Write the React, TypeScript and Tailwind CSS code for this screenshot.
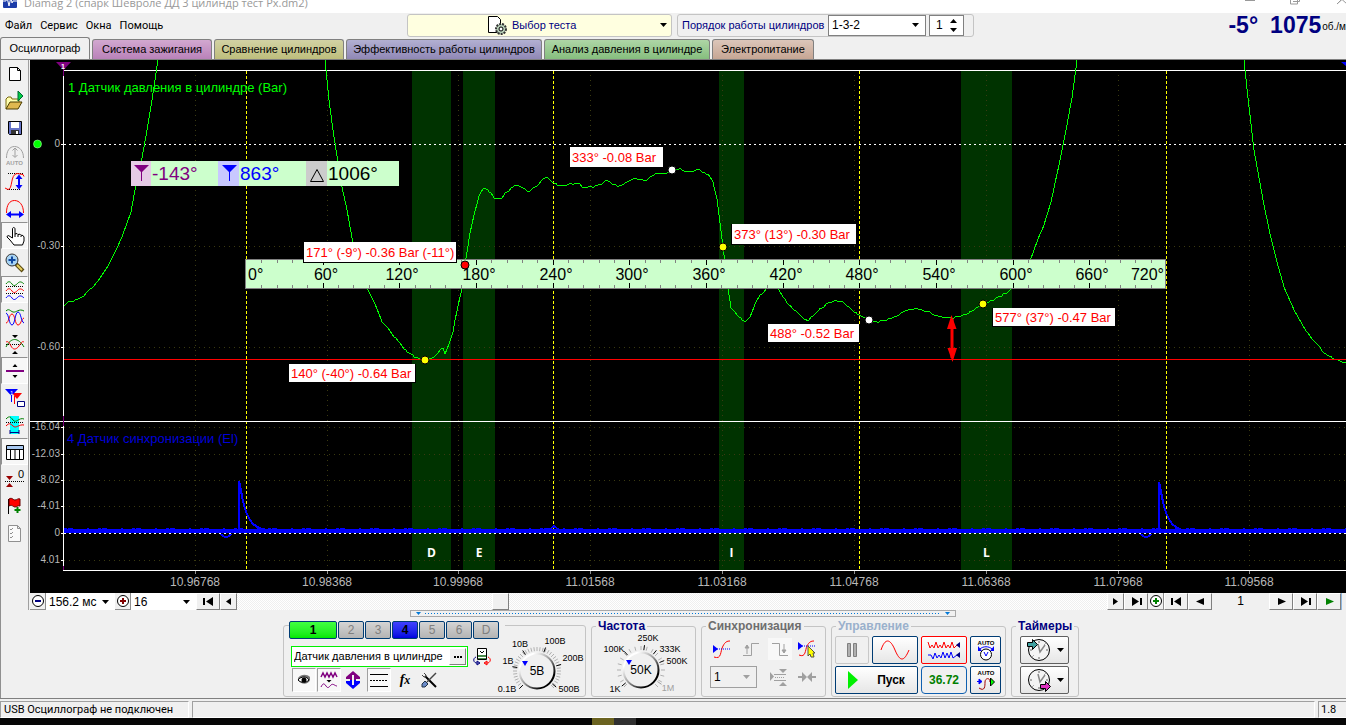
import type { ReactNode } from "react";

type Point = [number, number];

const tabs = [
  { label: "Система зажигания", style: "w-[120px] from-[#d2a8d0] to-[#b982b9]" },
  { label: "Сравнение цилиндров", style: "w-[130px] from-[#d2d2a4] to-[#bebe7c]" },
  { label: "Эффективность работы цилиндров", style: "w-[196px] from-[#b2b0d2] to-[#9088b6]" },
  { label: "Анализ давления в цилиндре", style: "w-[166px] from-[#aed6a6] to-[#86be7e]" },
  { label: "Электропитание", style: "w-[102px] from-[#dcc6ba] to-[#c6a694]" },
];

/* ---------- small shared parts ---------- */

const Icon = ({ w = 20, h = 20, children }: { w?: number; h?: number; children: ReactNode }) => (
  <svg width={w} height={h} viewBox={`0 0 ${w} ${h}`} fill="none" className="block shrink-0" aria-hidden="true">
    {children}
  </svg>
);

const Caret = () => (
  <svg width="7" height="4" viewBox="0 0 7 4" className="shrink-0" aria-hidden="true">
    <path d="M0 0h7L3.5 4z" fill="currentColor" />
  </svg>
);

const Select = ({ label, value, box }: { label: string; value: string; box: string }) => (
  <div className={`relative flex items-center ${box}`}>
    <select aria-label={label} defaultValue={value} className="h-full w-full appearance-none bg-transparent pl-[3px] text-[12px] leading-none text-black outline-none">
      <option>{value}</option>
    </select>
    <span className="pointer-events-none absolute right-[6px]">
      <Caret />
    </span>
  </div>
);

/* ---------- left toolbar ---------- */

const tools: { name: string; pressed?: boolean; icon: ReactNode }[] = [
  {
    name: "Новый",
    icon: <path d="M4.5 3.5h8l3 3v10h-11zM12.5 3.5v3h3" fill="#fff" stroke="#000" />,
  },
  {
    name: "Открыть",
    icon: (
      <>
        <path d="M1 18V8l2-2h3l1 2h7v3" fill="#ffffb0" stroke="#7a6a10" />
        <path d="M1 18l4-7h12l-4 7z" fill="#e0b850" stroke="#4a3c00" />
        <path d="M13 0v10l5-5z" fill="#0c4" stroke="#063" />
      </>
    ),
  },
  {
    name: "Сохранить",
    icon: (
      <>
        <path d="M3.500 3.500h13v13h-12l-1-1z" fill="#6674c8" stroke="#000" />
        <path d="M6 4h8v6H6z" fill="#fff" />
        <path d="M6 12h8v4H6z" fill="#333" />
        <path d="M11 13h2v3h-2z" fill="#fff" />
      </>
    ),
  },
  {
    name: "Авто",
    icon: (
      <>
        <path d="M1.500 13c0-7 3-11.500 8-11.500s9 4.500 9 11.500" stroke="#a0a0a0" />
        <path d="M10 3v9M7.500 5.500L10 3l2.500 2.500M7.500 10l2.500 2.500L12.500 10" stroke="#a0a0a0" />
        <text x="1" y="20" fontSize="6" fontWeight="bold" fill="#a0a0a0">AUTO</text>
      </>
    ),
  },
  {
    name: "Масштаб по вертикали",
    icon: (
      <>
        <path d="M3 1.500h15M2 17.500h14" stroke="#000" strokeDasharray="1 1" />
        <path d="M0 16l3 1.500c5 0 2-15 9-16l6 1 1 2" stroke="#f00" />
        <path d="M14 4v12" stroke="#00f" strokeWidth="2" />
        <path d="M10.500 7L14 2.500 17.500 7zM10.500 13l3.500 4.500 3.500-4.500z" fill="#00f" />
      </>
    ),
  },
  {
    name: "Масштаб по горизонтали",
    icon: (
      <>
        <path d="M1.500 14c0-8 3-12.500 8-12.500S18.500 6 18.500 14" stroke="#f00" />
        <path d="M3 15.500h14" stroke="#00f" strokeWidth="2" />
        <path d="M6 12l-5 3.500L6 19zM14 12l5 3.500L14 19z" fill="#00f" />
      </>
    ),
  },
  {
    name: "Рука",
    pressed: true,
    icon: (
      <path
        d="M7.500 12V3c0-2 2.500-2 2.500 0v5l2-.500 1 1 2-.300 1 1 2 .300 1 1.500v4l-1.500 4H9L5 14l-3-3c0-1.500 1.500-2 3-.500zM10 8v3M13 8.500V11M16 9.500V11"
        fill="#fff"
        stroke="#000"
      />
    ),
  },
  {
    name: "Лупа",
    icon: (
      <>
        <path d="M11 11l7 7" stroke="#5a4a10" strokeWidth="4" />
        <path d="M12 12l5 5" stroke="#e8d060" strokeWidth="2" />
        <circle cx="7" cy="7" r="6" fill="#a8d4f4" stroke="#333" />
        <path d="M3.500 7h7M7 3.500v7" stroke="#1048a0" strokeWidth="2" />
      </>
    ),
  },
  {
    name: "Раздельно",
    pressed: true,
    icon: (
      <>
        <path d="M1 4c2-3 4-3 6 0s4 1 6-1 4-1 6 1" stroke="#008000" />
        <path d="M1 11c2-3 4-3 6 0s4 1 6-1 4-1 6 1" stroke="#f00" />
        <path d="M1 18c2-3 4-3 6 0s4 1 6-1 4-1 6 1" stroke="#00f" />
        <path d="M1 6.500h18M1 13.500h18" stroke="#000" strokeDasharray="1 1" />
      </>
    ),
  },
  {
    name: "Совместно",
    icon: (
      <>
        <path d="M1 4c3-3 4 0 7 1s6-4 11-1" stroke="#008000" />
        <path d="M1 16c3 0 3-9 6-9s3 11 6 11 3-6 6-7" stroke="#f00" />
        <path d="M1 6c3 1 3 12 6 12s3-13 6-13 3 10 6 11" stroke="#00f" />
      </>
    ),
  },
  {
    name: "Наложение",
    icon: (
      <>
        <path d="M1 10.500h18" stroke="#000" strokeDasharray="1 1" />
        <path d="M1 13c5-10 12-10 18 0" stroke="#008000" />
        <path d="M1 8c2-1 3 0 5 4s5 4 8 0 3-5 5-4" stroke="#f00" />
        <path d="M7 1h6l-3 3zM7 20h6l-3-3z" fill="#000" />
      </>
    ),
  },
  {
    name: "Разделитель",
    pressed: true,
    icon: (
      <>
        <path d="M1 10h18" stroke="#800080" strokeWidth="2" />
        <path d="M7.500 6h5L10 3zM7.500 14h5L10 17z" fill="#000" />
      </>
    ),
  },
  {
    name: "Маркеры",
    icon: (
      <>
        <path d="M7 5h10l-5 6z" fill="#f00" />
        <path d="M9.500 8v8" stroke="#f00" />
        <path d="M0 1h13L6.500 8z" fill="#00f" />
        <path d="M6.500 7v7" stroke="#00f" />
        <path d="M12.500 13.500h7v5h-7z" fill="#fff" stroke="#000080" />
        <text x="5" y="7" fontSize="6" fill="#fff">1</text>
      </>
    ),
  },
  {
    name: "Измерение",
    icon: (
      <>
        <path d="M5 1h9v18H5z" fill="#0ff" />
        <path d="M1 4c3-3 4-3 7 1s6-3 11-1" stroke="#008000" />
        <path d="M1 11c3-3 4-3 7 0s6-2 11-1" stroke="#f00" />
        <path d="M1 7.500h18" stroke="#000" strokeDasharray="1 1" />
        <path d="M5 17.500h9M5 15v4M14 15v4" stroke="#000080" />
      </>
    ),
  },
  {
    name: "Таблица",
    pressed: true,
    icon: (
      <>
        <path d="M1.500 3.500h17v14h-17z" fill="#fff" stroke="#000" />
        <path d="M2 4h16v3H2z" fill="#a8c8f0" />
        <path d="M1.500 7.500h17M5.500 7v10M10 7v10M14.500 7v10" stroke="#000" />
      </>
    ),
  },
  {
    name: "Обнулить",
    icon: (
      <>
        <path d="M1 7h7l-3.500 4zM1 18h7l-3.500-4z" fill="#900" />
        <path d="M0 12.500h19" stroke="#000" strokeDasharray="1 1" />
        <text x="13" y="9" fontSize="11" fill="#000">0</text>
      </>
    ),
  },
  {
    name: "Флаг",
    icon: (
      <>
        <path d="M3.500 3v15" stroke="#000" />
        <path d="M4 3c3-2 4 1 6 1s3-2 5-1v7c-2-1-3 1-5 1s-3-3-6-1z" fill="#f00" stroke="#600" />
        <path d="M12.500 11v6M9.500 14h6" stroke="#008000" strokeWidth="2" />
      </>
    ),
  },
  {
    name: "Список",
    icon: (
      <>
        <path d="M3.500 2.500h9l3 3v13h-12zM12.500 2.500v3h3" fill="#fafafa" stroke="#909090" />
        <path d="M5 6l1 1 2-2M5 10l1 1 2-2M5 14l1 1 2-2" stroke="#909090" />
      </>
    ),
  },
];

const Toolbar = () => (
  <aside className="flex w-[30px] shrink-0 border-l border-[#909090]">
    <div className="flex w-[28px] flex-col border-r border-[#a0a0a0]">
      {tools.map((tool) => (
        <button
          key={tool.name}
          type="button"
          aria-label={tool.name}
          className={`flex h-[27px] w-full items-center justify-center border ${
            tool.pressed ? "border-t-[#909090] border-r-white border-b-white border-l-[#909090] bg-[#f7f7f7]" : "border-transparent"
          }`}
        >
          <Icon>{tool.icon}</Icon>
        </button>
      ))}
    </div>
  </aside>
);

/* ---------- oscilloscope chart ---------- */

const pressureLeft: Point[] = [
  [64, 305], [70, 301], [80, 298], [88, 291], [98, 281], [108, 266], [116, 250], [122, 237],
  [131, 212], [135, 190], [142, 158], [147, 130], [152, 100], [158, 60],
];

const pressureMain: Point[] = [
  [325, 60], [329, 100], [333, 130], [338, 163], [342, 187], [347, 210], [353, 243], [360, 266],
  [368, 290], [375, 304], [382, 321], [392, 333], [400, 343], [407, 351], [414, 356], [420, 359],
  [425, 360], [430, 358], [436, 355], [441, 349], [443, 348], [445, 354], [449, 344], [453, 332],
  [455, 320], [458, 306], [461, 293], [463, 277], [466, 258], [470, 233], [475, 211], [479, 196],
  [484, 187], [489, 191], [494, 197], [500, 199], [505, 193], [511, 188], [517, 184], [523, 188],
  [529, 191], [535, 187], [541, 181], [546, 177], [552, 181], [557, 184], [563, 186], [570, 183],
  [578, 183], [584, 187], [592, 186], [600, 184], [606, 180], [613, 184], [620, 185], [627, 181],
  [635, 178], [645, 180], [652, 175], [657, 172], [665, 173], [671, 170], [680, 168], [686, 171],
  [692, 171], [698, 169], [703, 172], [708, 174], [713, 182], [717, 199], [720, 223], [723, 247],
  [725, 262], [728, 288], [731, 308], [737, 314], [742, 319], [746, 321], [750, 317], [755, 304],
  [760, 295], [766, 289], [772, 286], [778, 288], [783, 297], [790, 305], [798, 313], [807, 320],
  [813, 316], [820, 308], [828, 303], [835, 300], [841, 301], [848, 306], [857, 313], [863, 317],
  [869, 320], [877, 321], [888, 319], [895, 316], [901, 313], [906, 310], [914, 308], [922, 309],
  [930, 312], [938, 316], [950, 317], [961, 316], [970, 311], [978, 307], [983, 304], [992, 300],
  [1003, 294], [1013, 288], [1022, 275], [1031, 258], [1038, 239], [1044, 225], [1051, 202],
  [1060, 160], [1067, 125], [1072, 98], [1077, 60],
];

const pressureRight: Point[] = [
  [1244, 60], [1248, 98], [1254, 150], [1263, 200], [1271, 238], [1277, 262], [1284, 287],
  [1295, 312], [1306, 331], [1318, 345], [1325, 353], [1332, 357], [1338, 360], [1346, 362],
];

// fills in every 2px between the points and adds sensor noise where the signal is slow
const trace = (points: Point[]) => {
  const out: string[] = [];
  for (let i = 0; i < points.length - 1; i++) {
    const [x0, y0] = points[i];
    const [x1, y1] = points[i + 1];
    const flat = Math.abs(y1 - y0) < 1.5 * (x1 - x0);
    for (let x = x0; x < x1; x += 2) {
      const noise = flat ? ((x * 7) % 5 > 2 ? 1 : 0) : 0;
      out.push(`${x},${Math.round(y0 + ((y1 - y0) * (x - x0)) / (x1 - x0)) + noise}`);
    }
  }
  out.push(points[points.length - 1].join(","));
  return out.join(" ");
};

const timeTicks = [195, 327, 458, 590, 722, 854, 986, 1118, 1249];
const timeLabels = ["10.96768", "10.98368", "10.99968", "11.01568", "11.03168", "11.04768", "11.06368", "11.07968", "11.09568"];

const levels = [
  { y: 144, text: "0", zero: true },
  { y: 246, text: "-0.30" },
  { y: 347, text: "-0.60" },
  { y: 427, text: "-16.04" },
  { y: 454, text: "-12.03" },
  { y: 480, text: "-8.02" },
  { y: 506, text: "-4.01" },
  { y: 533, text: "0", zero: true },
  { y: 560, text: "4.01" },
];

const bands = [
  { x: 412, w: 39, text: "D" },
  { x: 463, w: 32, text: "E" },
  { x: 719, w: 25, text: "I" },
  { x: 961, w: 51, text: "L" },
];

const notes = [
  { x: 570, y: 147, w: 93, h: 20, text: "333° -0.08 Bar" },
  { x: 732, y: 224, w: 124, h: 20, text: "373° (13°) -0.30 Bar" },
  { x: 304, y: 242, w: 152, h: 20, text: "171° (-9°) -0.36 Bar (-11°)" },
  { x: 289, y: 364, w: 126, h: 18, text: "140° (-40°) -0.64 Bar" },
  { x: 768, y: 324, w: 91, h: 18, text: "488° -0.52 Bar" },
  { x: 993, y: 308, w: 122, h: 18, text: "577° (37°) -0.47 Bar" },
];

const dots = [
  { x: 672, y: 170, fill: "#fff" },
  { x: 723, y: 247, fill: "#ff0" },
  { x: 465, y: 265, fill: "#f00" },
  { x: 425, y: 360, fill: "#ff0" },
  { x: 869, y: 320, fill: "#fff" },
  { x: 983, y: 304, fill: "#ff0" },
];

const Ruler = () => (
  <g>
    <rect x="245.5" y="259.5" width="920" height="29" fill="#ccffcc" stroke="#808080" />
    {Array.from({ length: 59 }, (_, i) => {
      const x = Math.round(246 + ((i + 1) * 920) / 60);
      const major = (i + 1) % 5 === 0;
      return (
        <path
          key={i}
          d={major ? `M${x + 0.5} 260v5M${x + 0.5} 288v-5` : `M${x + 0.5} 260v3M${x + 0.5} 288v-3`}
          stroke={major ? "#000" : "#808080"}
        />
      );
    })}
    <text x="248" y="280" fontSize="16">0°</text>
    {Array.from({ length: 11 }, (_, i) => (
      <text key={i} x={Math.round(249 + ((i + 1) * 920) / 12)} y="280" fontSize="16" textAnchor="middle">
        {(i + 1) * 60}°
      </text>
    ))}
    <text x="1164" y="280" fontSize="16" textAnchor="end">720°</text>
  </g>
);

const Readout = () => (
  <g fontSize="19">
    <rect x="131" y="161" width="268" height="25" fill="#ccffcc" />
    <rect x="131" y="161" width="20" height="25" fill="#e6cbe6" />
    <rect x="218" y="161" width="21" height="25" fill="#c8c8ff" />
    <rect x="306" y="161" width="21" height="25" fill="#ccc" />
    <path d="M134 165h15l-7 7v9h-1v-9z" fill="#800080" />
    <path d="M222 165h15l-7 7v9h-1v-9z" fill="#00f" />
    <path d="M310.500 181.500h13l-6.500-12z" fill="none" stroke="#000" />
    <text x="152" y="180" fill="#800080">-143°</text>
    <text x="240" y="180" fill="#00f">863°</text>
    <text x="328" y="180" fill="#000">1006°</text>
  </g>
);

const Chart = () => (
  <svg
    viewBox="30 60 1316 533"
    preserveAspectRatio="xMinYMin slice"
    className="block min-h-0 w-full flex-1 bg-black"
    role="img"
    aria-label="Осциллограмма давления в цилиндре"
  >
    {bands.map((b) => (
      <rect key={b.text} x={b.x} y="71" width={b.w} height="499" fill="#003300" />
    ))}

    <g stroke="#3a3a10" strokeDasharray="1 4" shapeRendering="crispEdges">
      {timeTicks.map((x) => (
        <path key={x} d={`M${x + 0.5} 75v495`} />
      ))}
      {levels.map((l) => !l.zero && <path key={l.y} d={`M64 ${l.y + 0.5}h1282`} />)}
    </g>
    <g stroke="#ff0" strokeDasharray="3 2" shapeRendering="crispEdges">
      <path d="M246.500 71v499M553.500 71v499M859.500 71v499M1166.500 71v499" />
    </g>
    <path d="M64 144.500h1282" stroke="#fff" strokeDasharray="2 3" shapeRendering="crispEdges" />

    <g fill="none" stroke="#fff" shapeRendering="crispEdges">
      <path d="M63.500 70v501M63 70.500h1283M30 421.500h1316M63 570.500h1283" />
      {levels.map((l) => (
        <path key={l.y} d={`M61 ${l.y + 0.5}h3`} />
      ))}
      {timeTicks.map((x) => (
        <path key={x} d={`M${x + 0.5} 571v3`} stroke="#909090" />
      ))}
    </g>
    <path d="M63.500 69v7M63.500 416v10M63.500 566v4" stroke="#800080" />
    <path d="M56 62h15l-7.500 8z" fill="#800080" />
    <text x="63" y="69" fontSize="7" fontWeight="bold" fill="#fff" textAnchor="middle">1</text>
    <path d="M1341 62h5v4z" fill="#00f" />
    <circle cx="37.500" cy="144" r="4" fill="#0f0" stroke="#cfc" strokeWidth="0.500" />

    <g fontSize="10" fill="#b8b8b8" textAnchor="end">
      {levels.map((l) => (
        <text key={l.y} x="60" y={l.y + 3}>{l.text}</text>
      ))}
    </g>
    <g fontSize="12" fill="#b8b8b8" textAnchor="middle">
      {timeTicks.map((x, i) => (
        <text key={x} x={x} y="586">{timeLabels[i]}</text>
      ))}
    </g>

    <text x="68" y="92" fontSize="13" fill="#0f0">1 Датчик давления в цилиндре (Bar)</text>
    <text x="67" y="443" fontSize="13" fill="#0000d8">4 Датчик синхронизации (El)</text>

    <g fill="none" stroke="#0f0" shapeRendering="crispEdges">
      <polyline points={trace(pressureLeft)} />
      <polyline points={trace(pressureMain)} />
      <polyline points={trace(pressureRight)} />
    </g>
    <path d="M64 359.500h1282" stroke="#f00" shapeRendering="crispEdges" />

    {/* sync sensor */}
    <g fill="none" stroke="#00f" shapeRendering="crispEdges">
      <path d="M64 531h1282" strokeWidth="4" />
      <path d="M64 528.500h1282" strokeDasharray="3 1 5 14 2 9" />
      <path d="M221 534c3 4 7 4 10 0" strokeWidth="2" />
      <path d="M239 533v-52c2 6 3 22 8 33 4 9 8 14 20 16" strokeWidth="2" />
      <path d="M549 530l5-4 5 4" strokeWidth="2" />
      <path d="M1141 534c3 4 7 4 10 0" strokeWidth="2" />
      <path d="M1159 533v-51c2 6 3 22 8 33 4 9 8 14 20 16" strokeWidth="2" />
    </g>
    <path d="M64 533.500h1282" stroke="#fff" strokeDasharray="2 3" shapeRendering="crispEdges" />

    <g fontSize="12" fontWeight="bold" fill="#fff" textAnchor="middle" className="font-['Open_Sans',sans-serif]">
      {bands.map((b) => (
        <text key={b.text} x={b.x + b.w / 2} y="557">{b.text}</text>
      ))}
    </g>

    <Ruler />
    <Readout />

    {notes.map((n) => (
      <g key={n.text}>
        <rect x={n.x - 1} y={n.y} width={n.w + 2} height={n.h + 1} fill="#000" />
        <rect x={n.x} y={n.y} width={n.w} height={n.h} fill="#fff" />
        <text x={n.x + 2} y={n.y + n.h / 2 + 5} fontSize="13" fill="#f00">{n.text}</text>
      </g>
    ))}
    {dots.map((d) => (
      <circle key={d.x} cx={d.x} cy={d.y} r="4" fill={d.fill} stroke="#000" />
    ))}
    <path d="M952 319v39" stroke="#f00" strokeWidth="3" />
    <path d="M947 329l4.500-14 5 14zM947.500 348l5 14 4.500-14z" fill="#f00" />
  </svg>
);

/* ---------- navigation under the chart ---------- */

const NavButton = ({ label, box, color = "#000", d }: { label: string; box: string; color?: string; d: string }) => (
  <button
    type="button"
    aria-label={label}
    className={`flex h-full shrink-0 items-center justify-center border border-t-white border-r-[#808080] border-b-[#808080] border-l-white bg-[#f0f0f0] ${box}`}
  >
    <svg width="11" height="9" viewBox="0 0 11 9" aria-hidden="true">
      <path d={d} fill={color} />
    </svg>
  </button>
);

const RoundButton = ({ label, color, plus }: { label: string; color: string; plus?: boolean }) => (
  <button type="button" aria-label={label} className="flex h-full w-4 shrink-0 items-center justify-center border-r border-b border-[#909090] bg-[#f0f0f0]">
    <svg width="14" height="14" viewBox="0 0 14 14" aria-hidden="true">
      <circle cx="7" cy="7" r="5.500" fill="#fff" stroke="#000" />
      <path d={plus ? "M4 7h6M7 4v6" : "M4 7h6"} stroke={color} strokeWidth="2" />
    </svg>
  </button>
);

const LEFT = "M8 1v7L3 4.500z";
const RIGHT = "M3 1v7l5-3.500z";
const FIRST = "M0 1h2v7H0zM10 0v9L3 4.500z";
const LAST = "M9 1h2v7H9zM1 0v9l7-4.500z";
const PREV = "M9 1v7L1 4.500z";
const NEXT = "M2 1v7l8-3.500z";

const NavRow = () => (
  <div className="flex h-[17px] shrink-0 bg-[#f0f0f0]">
    <RoundButton label="Уменьшить" color="#000080" />
    <Select label="Развёртка" value="156.2 мс" box="w-[69px] bg-white" />
    <RoundButton label="Увеличить" color="#800000" plus />
    <Select label="Количество" value="16" box="w-[65px] bg-white" />
    <NavButton label="В начало" box="w-[24px]" d={FIRST} />
    <NavButton label="Влево" box="w-[17px]" d={LEFT} />
    <div className="flex flex-1 bg-[repeating-conic-gradient(#ffffff_0_25%,#efefef_0_50%)] bg-[length:2px_2px] pl-[255px]">
      <div className="h-full w-[17px] border border-t-white border-r-[#808080] border-b-[#808080] border-l-white bg-[#f0f0f0]" />
    </div>
    <NavButton label="Вправо" box="w-[17px]" d={RIGHT} />
    <NavButton label="В конец" box="w-[24px]" d={LAST} />
    <RoundButton label="Добавить страницу" color="#008000" plus />
    <NavButton label="Первая страница" box="w-[24px]" d={FIRST} />
    <NavButton label="Предыдущая страница" box="w-[24px]" d={PREV} />
    <span className="w-[57px] text-center text-[12px] leading-[17px]">1</span>
    <NavButton label="Следующая страница" box="w-[24px]" d={NEXT} />
    <NavButton label="Последняя страница" box="w-[24px]" d={LAST} />
    <NavButton label="Воспроизвести" box="w-[24px]" color="#008000" d={NEXT} />
    <div className="w-[5px] border-l border-[#90b8e0]" />
  </div>
);

/* ---------- control panels ---------- */

type DialProps = {
  name: string;
  view: string;
  w: number;
  h: number;
  cx: number;
  cy: number;
  value: string;
  step: number;
  labels: { x: number; y: number; text: string; angle: number; off?: boolean }[];
};

const polar = (cx: number, cy: number, r: number, deg: number) => {
  const a = (deg * Math.PI) / 180;
  return `${(cx + r * Math.sin(a)).toFixed(1)} ${(cy - r * Math.cos(a)).toFixed(1)}`;
};

const Dial = ({ name, view, w, h, cx, cy, value, step, labels }: DialProps) => (
  <svg width={w} height={h} viewBox={view} role="img" aria-label={name} className="block shrink-0">
    <defs>
      <linearGradient id={name} x1="0" y1="0" x2="1" y2="1">
        <stop offset="0.200" stopColor="#fff" />
        <stop offset="0.500" stopColor="#999" />
        <stop offset="0.800" stopColor="#000" />
      </linearGradient>
    </defs>
    {Array.from({ length: Math.floor(270 / step) + 1 }, (_, i) => (
      <path key={i} d={`M${polar(cx, cy, 20, i * step - 135)}L${polar(cx, cy, 24, i * step - 135)}`} stroke="#b0b0b0" />
    ))}
    {labels.map((l) => (
      <path key={l.text} d={`M${polar(cx, cy, 20, l.angle)}L${polar(cx, cy, 25, l.angle)}`} stroke={l.off ? "#a0a0a0" : "#000"} />
    ))}
    <circle cx={cx} cy={cy} r="17.500" fill="#f0f0f0" stroke={`url(#${name})`} strokeWidth="2" />
    <path d={`M${cx - 15} ${cy - 10}h6l-3 5z`} fill="#00f" />
    <text x={cx} y={cy + 4} fontSize="12" textAnchor="middle">{value}</text>
    {labels.map((l) => (
      <text key={l.text} x={l.x} y={l.y + 3} fontSize="9" textAnchor="middle" fill={l.off ? "#a0a0a0" : "#000"}>
        {l.text}
      </text>
    ))}
  </svg>
);

const channels = ["2", "3", "4", "5", "6", "D"];

const toolButton = "flex size-6 items-center justify-center border";
const toolDown = "border-t-[#a0a0a0] border-l-[#a0a0a0] border-r-white border-b-white bg-[#f8f8f8]";

const ChannelPanel = () => (
  <fieldset className="mt-[5px] flex w-[303px] rounded-[3px] border border-[#c4c4c4] pl-[5px]">
    <div className="-mt-[5px] w-[208px] shrink-0">
      <div className="flex w-[216px] gap-px bg-[#f0f0f0]">
        <button type="button" className="h-[18px] w-12 shrink-0 rounded-[2px] border border-[#003c74] bg-linear-to-b from-[#40ff40] to-[#00e800] text-[12px] leading-none font-bold">
          1
        </button>
        {channels.map((c) => (
          <button
            key={c}
            type="button"
            className={`h-[18px] w-[26px] shrink-0 rounded-[2px] border border-[#003c74] text-[12px] leading-none ${
              c === "4" ? "bg-linear-to-b from-[#4040ff] to-[#0000e0] font-bold text-black" : "bg-linear-to-b from-[#d4d4d4] to-[#b4b4b4] text-[#808080]"
            }`}
          >
            {c}
          </button>
        ))}
      </div>
      <div className="mt-[7px] flex items-center gap-[5px] pl-[2px]">
        <div className="flex h-[21px] w-[177px] items-center border border-[#00f000] bg-white">
          <input aria-label="Название канала" defaultValue="Датчик давления в цилиндре" className="min-w-0 flex-1 pl-[2px] text-[11px] outline-none" />
          <button type="button" aria-label="Выбрать датчик" className="mr-px flex h-[17px] w-[17px] items-center justify-center border border-t-white border-r-[#808080] border-b-[#808080] border-l-white bg-[#f0f0f0]">
            <svg width="8" height="2" viewBox="0 0 8 2" aria-hidden="true">
              <path d="M0 0h2v2H0zM3 0h2v2H3zM6 0h2v2H6z" />
            </svg>
          </button>
        </div>
        <button type="button" aria-label="Поменять датчик">
          <Icon w={18} h={19}>
            <path d="M4.500 1.500h9v11h-9z" fill="#fff" stroke="#000" />
            <path d="M5 8h8v2H5zM5 11h8v1H5z" fill="#4a8a4a" />
            <path d="M7 4l2 2 2-2" stroke="#000" />
            <path d="M3 10c-3 1-3 5 0 6h3M4 14l3 2-3 2z" stroke="#000080" />
            <path d="M15 10c3 1 3 5 0 6h-3M14 14l-3 2 3 2z" stroke="#f00" />
          </Icon>
        </button>
      </div>
      <div className="mt-px flex items-center pl-[3px]">
        <button type="button" aria-label="Показать" className={`${toolButton} ${toolDown}`}>
          <Icon w={14} h={12}>
            <path d="M1 4c3-4 9-4 12-1v3c-2 5-9 5-12 0z" fill="#777" />
            <path d="M1 6c3-4 9-4 11 0-3 3-8 3-11 0z" fill="#fff" stroke="#000" />
            <circle cx="7" cy="6" r="2.500" fill="#000" />
          </Icon>
        </button>
        <button type="button" aria-label="Фильтр" className={`${toolButton} ml-px ${toolDown}`}>
          <Icon w={18} h={18}>
            <path d="M1 6l2-4 2 4 2-4 2 4 2-4 2 4 2-4 2 4" stroke="#800080" strokeWidth="1.500" />
            <path d="M6.500 9h5L9 11.500z" fill="#000" />
            <path d="M1 16c2-4 3-4 5-1s3 1 5-1 4 1 6 1" stroke="#800080" />
          </Icon>
        </button>
        <button type="button" aria-label="Смещение" className={`${toolButton} border-transparent`}>
          <Icon w={16} h={18}>
            <path d="M8 0l7 6v2h-4v1H5V8H1V6z" fill="#800080" />
            <path d="M8 18l7-6v-2h-4V9H5v1H1v2z" fill="#00f" />
            <path d="M8 4v10" stroke="#f0f0f0" strokeWidth="2" />
          </Icon>
        </button>
        <button type="button" aria-label="Уровни" className={`${toolButton} ml-[2px] ${toolDown}`}>
          <Icon w={18} h={15}>
            <path d="M0 1.500h18M0 13.500h18" stroke="#000" />
            <path d="M0 7.500h18" stroke="#000" strokeDasharray="2 1" />
          </Icon>
        </button>
        <button type="button" aria-label="Функция" className={`${toolButton} ml-[2px] border-transparent font-['Liberation_Serif',serif] text-[14px] leading-none font-bold italic`}>
          f<span className="text-[12px]">x</span>
        </button>
        <button type="button" aria-label="Настройка" className={`${toolButton} border-transparent`}>
          <Icon w={16} h={16}>
            <path d="M4 4l7 7 4 4" stroke="#000" strokeWidth="2" />
            <path d="M1 3l2 2h2V3L3 1" stroke="#444" />
            <path d="M15 1L6 10" stroke="#444" strokeWidth="1.500" />
            <path d="M1 12l3-3 3 3-3 3H1z" fill="#6a8ac8" stroke="#234" />
          </Icon>
        </button>
      </div>
    </div>
    <div className="pt-[6px]">
      <Dial
        name="Чувствительность"
        view="497 632 88 62"
        w={88}
        h={62}
        cx={537}
        cy={671}
        value="5В"
        step={7.5}
        labels={[
          { x: 507, y: 689, text: "0.1В", angle: -135 },
          { x: 508, y: 661, text: "1В", angle: -80 },
          { x: 520, y: 644, text: "10В", angle: -35 },
          { x: 555, y: 641, text: "100В", angle: 20 },
          { x: 573, y: 658, text: "200В", angle: 75 },
          { x: 569, y: 689, text: "500В", angle: 130 },
        ]}
      />
    </div>
  </fieldset>
);

const Panel = ({ title, color, box, inner, children }: { title: string; color: string; box: string; inner: string; children: ReactNode }) => (
  <fieldset className={`rounded-[3px] border border-[#c4c4c4] ${box}`}>
    <legend className={`ml-[4px] px-[2px] text-[12px] leading-[12px] font-bold ${color}`}>{title}</legend>
    <div className={inner}>{children}</div>
  </fieldset>
);

const FrequencyPanel = () => (
  <Panel title="Частота" color="text-[#000080]" box="w-[105px]" inner="pl-[6px]">
    <Dial
      name="Частота"
      view="598 632 96 62"
      w={96}
      h={62}
      cx={641}
      cy={670}
      value="50K"
      step={15}
      labels={[
        { x: 615, y: 689, text: "1K", angle: -130 },
        { x: 614, y: 649, text: "100K", angle: -42 },
        { x: 648, y: 638, text: "250K", angle: 8 },
        { x: 670, y: 649, text: "333K", angle: 38 },
        { x: 677, y: 661, text: "500K", angle: 68 },
        { x: 668, y: 688, text: "1M", angle: 125, off: true },
      ]}
    />
  </Panel>
);

const SyncPanel = () => (
  <Panel title="Синхронизация" color="text-[#6e6e6e]" box="w-[125px]" inner="px-[8px]">
    <div className="mt-[5px] flex items-center gap-[5px]">
      <button type="button" aria-label="Уровень синхронизации" className="flex h-6 w-6 items-center justify-center">
        <Icon w={18} h={18}>
          <path d="M1 17c8 3 6-6 9-11 2-4 4-5 7-5" stroke="#f00" />
          <path d="M4 9h14" stroke="#00f" strokeDasharray="1 1" />
          <path d="M0 5v8l5-4z" fill="#00f" />
        </Icon>
      </button>
      <button type="button" disabled aria-label="Передний фронт" className="flex h-6 w-6 items-center justify-center">
        <Icon w={18} h={16}>
          <path d="M1 14.500h8.500v-12H17" stroke="#a0a0a0" />
          <path d="M5 13V4M3 7l2-3 2 3z" fill="#a0a0a0" stroke="#a0a0a0" />
        </Icon>
      </button>
      <button type="button" disabled aria-label="Задний фронт" className="flex h-[22px] w-6 items-center justify-center bg-[#f8f8f8]">
        <Icon w={18} h={16}>
          <path d="M1 2.500h7.500v12H17" stroke="#a0a0a0" />
          <path d="M13 3v9M11 9l2 3 2-3z" fill="#a0a0a0" stroke="#a0a0a0" />
        </Icon>
      </button>
      <button type="button" aria-label="Курсор синхронизации" className="flex h-6 w-5 items-center justify-center">
        <Icon w={18} h={18}>
          <path d="M1 15c7 3 6-5 8-9 2-4 4-5 7-5" stroke="#f00" />
          <path d="M4 6h14" stroke="#00f" strokeDasharray="1 1" />
          <path d="M0 2v8l5-4z" fill="#00f" />
          <path d="M10 6l7 7h-2l1 4h-3l-1-3-2 2z" fill="#ff0" stroke="#554" />
        </Icon>
      </button>
    </div>
    <div className="mt-[5px] flex items-center">
      <Select label="Канал синхронизации" value="1" box="h-[22px] w-[47px] border border-[#a0a0a0] text-[#a0a0a0]" />
      <button type="button" disabled aria-label="Разнести" className="ml-[13px]">
        <Icon w={18} h={17}>
          <path d="M0 3v9l4-4.500zM9 0h8l-4 4zM9 17h8l-4-4z" fill="#a0a0a0" />
          <path d="M4 5.500h12M4 11.500h12" stroke="#a0a0a0" />
          <path d="M5 8.500h10" stroke="#a0a0a0" strokeDasharray="1 1" />
        </Icon>
      </button>
      <button type="button" disabled aria-label="Свести" className="ml-[10px]">
        <Icon w={18} h={10}>
          <path d="M0 4h4V0l5 5-5 5V6H0zM18 4h-4V0L9 5l5 5V6h4z" fill="#a0a0a0" />
        </Icon>
      </button>
    </div>
  </Panel>
);

const control = "flex h-7 items-center justify-center rounded-[2px] border bg-linear-to-b from-white to-[#e6e6e6]";

const ControlPanel = () => (
  <Panel title="Управление" color="text-[#9ab0cc]" box="w-[175px]" inner="px-[3px]">
    <div className="mt-[4px] flex gap-[3px]">
      <button type="button" disabled aria-label="Пауза" className="flex h-7 w-[34px] items-center justify-center rounded-[2px] border border-[#c8c8c8]">
        <Icon w={12} h={16}>
          <path d="M1.500 1.500h3v13h-3zM7.500 1.500h3v13h-3z" fill="#b0b0b0" stroke="#808080" />
        </Icon>
      </button>
      <button type="button" aria-label="Синусоида" className={`${control} w-[46px] border-[#003c74]`}>
        <Icon w={30} h={20}>
          <path d="M1 10C5-2 10-2 15 10s9 12 14 0" stroke="#f00" />
        </Icon>
      </button>
      <button type="button" aria-label="Каналы" className={`${control} w-[46px] border-[#f00]`}>
        <Icon w={34} h={22}>
          <path d="M1 3l2 6 2-3 2 3 2-6 2 6 2-3 2 3 2-6 2 6 2-3 2 3 2-6 2 6 3-3" stroke="#f00" />
          <path d="M1 16h3l2 4 2-6 2 5 2-3 2 3 2-6 2 6 2-5 2 5 2-6 2 6 4-3" stroke="#00f" />
          <path d="M33 3v6l-4-3zM33 13v6l-4-3z" fill="#000080" />
        </Icon>
      </button>
      <button type="button" aria-label="Авто вольты" className={`${control} w-[31px] border-[#003c74]`}>
        <Icon w={20} h={24}>
          <text x="10" y="7" fontSize="6" fontWeight="bold" fill="#000" textAnchor="middle">AUTO</text>
          <path d="M4 11c3-3 9-3 12 0" stroke="#00f" />
          <path d="M2 8v5h4zM18 8v5h-4z" fill="#00f" />
          <circle cx="10" cy="16.500" r="5.500" fill="#fff" stroke="#000" />
          <path d="M8 14l2 4 2-4" stroke="#00f" />
        </Icon>
      </button>
    </div>
    <div className="mt-[2px] flex gap-[3px]">
      <button type="button" className={`${control} w-[83px] gap-[19px] border-[#003c74] text-[12px] font-bold`}>
        <svg width="10" height="18" viewBox="0 0 10 18" aria-hidden="true">
          <path d="M0 0v18l10-9z" fill="#00f000" />
        </svg>
        Пуск
      </button>
      <output className="flex h-7 w-[46px] items-center justify-center rounded-[4px] border border-[#1060b0] text-[12px] font-bold text-[#008000]">36.72</output>
      <button type="button" aria-label="Авто развёртка" className={`${control} w-[31px] border-[#003c74]`}>
        <Icon w={20} h={24}>
          <text x="10" y="7" fontSize="6" fontWeight="bold" fill="#000" textAnchor="middle">AUTO</text>
          <path d="M3 20c6 4 6-2 6-6s5-5 5 0" stroke="#a00000" />
          <path d="M1 13.500h4M3 11v5l3-2.500z" stroke="#00f" fill="#00f" />
          <path d="M14.500 10v8l4-4z" fill="#0f0" stroke="#000" />
        </Icon>
      </button>
    </div>
  </Panel>
);

const Clock = ({ arrow }: { arrow: ReactNode }) => (
  <Icon w={26} h={24}>
    <circle cx="13" cy="12" r="10.500" fill="#f4f4f4" stroke="#000" />
    <path d="M13 3v2M13 19v2M4 12h2M20 12h2M19.500 5.500l-1 1M6.500 18.500l1-1" stroke="#666" />
    <path d="M12 6l2 8 5-7" stroke="#888" strokeWidth="1.500" />
    {arrow}
  </Icon>
);

const TimerPanel = () => (
  <Panel title="Таймеры" color="text-[#000080]" box="w-[68px]" inner="px-[8px]">
    <button type="button" aria-label="Таймер запуска" className={`${control} mt-[4px] w-[49px] gap-[5px] border-[#606060]`}>
      <Clock arrow={<path d="M1.500 4.500h5v-3l5 5-5 5v-3h-5z" fill="#40a0a0" stroke="#000" />} />
      <Caret />
    </button>
    <button type="button" aria-label="Таймер остановки" className={`${control} mt-[2px] w-[49px] gap-[5px] border-[#606060]`}>
      <Clock arrow={<path d="M14.500 16.500h5v-3l5 5-5 5v-3h-5z" fill="#e030c0" stroke="#000" />} />
      <Caret />
    </button>
  </Panel>
);

const Splitter = () => (
  <div className="flex h-[7px] shrink-0 justify-center border-l border-[#909090]">
    <div className="ml-[18px] flex w-[546px] items-center gap-[4px] border border-[#a8a8a8] px-[5px] text-[#0078d7]">
      <svg width="5" height="3" viewBox="0 0 5 3" aria-hidden="true">
        <path d="M0 0h5L2.500 3z" fill="currentColor" />
      </svg>
      <div className="h-px flex-1 bg-[repeating-linear-gradient(90deg,#0078d7_0_1px,transparent_1px_3px)]" />
      <svg width="5" height="3" viewBox="0 0 5 3" aria-hidden="true">
        <path d="M0 0h5L2.500 3z" fill="currentColor" />
      </svg>
    </div>
  </div>
);

/* ---------- page ---------- */

const Header = () => (
  <header className="shrink-0">
    <div className="flex h-[13px] items-end justify-between overflow-hidden bg-white pl-[3px]">
      <div className="flex items-end gap-[7px]">
        <svg width="14" height="16" viewBox="0 0 14 16" className="mb-[5px]" aria-hidden="true">
          <rect width="14" height="16" rx="1" fill="#1c3ca8" />
          <path d="M0 9h3l1-4 2 9 2-9 1 6 1-2h4" fill="none" stroke="#fff" />
        </svg>
        <h1 className="pb-[2px] font-['Open_Sans',sans-serif] text-[11px] leading-[16px] text-[#999]">Diamag 2 (спарк Шевроле ДД 3 цилиндр тест Px.dm2)</h1>
      </div>
      <svg width="101" height="13" viewBox="0 0 101 13" className="shrink-0" fill="none" stroke="#999" aria-hidden="true">
        <path d="M0 .500h10M45.500-3v7h7v-7M48 1.500h6.500V-3M92 4l9-9M92 4l5-4.500 5 4.500" />
      </svg>
    </div>

    <div className="flex h-6 items-center">
      <nav className="flex w-[407px] shrink-0 gap-[8px] pt-[2px] pl-[5px] font-[Roboto,sans-serif] text-[11px]">
        <button type="button">Файл</button>
        <button type="button">Сервис</button>
        <button type="button">Окна</button>
        <button type="button">Помощь</button>
      </nav>
      <button type="button" className="flex h-[23px] w-[265px] shrink-0 items-center rounded-[3px] border border-[#c4c4c4] bg-[#ffffe0] pr-[4px] pl-[79px] text-[#000080]">
        <Icon w={21} h={21}>
          <path d="M1.500 1.500h9l3 3v13h-12z" fill="#fff" stroke="#000" />
          <circle cx="14" cy="14" r="5" fill="#b8d0b8" stroke="#333" strokeWidth="2" strokeDasharray="2 1" />
          <circle cx="14" cy="14" r="2" fill="#fff" stroke="#000" />
        </Icon>
        <span className="ml-[4px] flex-1 text-left text-[11px]">Выбор теста</span>
        <span className="text-black">
          <Caret />
        </span>
      </button>
      <div className="ml-[5px] flex h-[23px] w-[297px] shrink-0 items-center rounded-[3px] border border-[#c4c4c4] pl-[4px]">
        <span className="w-[146px] text-[11px] text-[#000080]">Порядок работы цилиндров</span>
        <Select label="Порядок работы цилиндров" value="1-3-2" box="h-[21px] w-[98px] border border-[#808080] bg-white" />
        <div className="ml-[3px] flex h-[21px] w-[35px] items-center border border-[#808080] bg-white">
          <input aria-label="Номер цилиндра" inputMode="numeric" defaultValue="1" className="w-[20px] pl-[6px] text-[12px] outline-none" />
          <div className="flex flex-col gap-[5px]">
            <button type="button" aria-label="Больше" className="rotate-180">
              <Caret />
            </button>
            <button type="button" aria-label="Меньше">
              <Caret />
            </button>
          </div>
        </div>
      </div>
      <div className="flex flex-1 items-center justify-end whitespace-nowrap text-[#000080]">
        <span className="text-[23px] leading-6 font-bold">-5°</span>
        <span className="ml-[12px] text-[23px] leading-6 font-bold">1075</span>
        <span className="ml-px pt-[2px] text-[10px] text-black">об./м</span>
      </div>
    </div>

    <div role="tablist" className="flex h-[23px] items-end gap-[2px] border-b border-[#808080] text-[11px]">
      <button type="button" role="tab" aria-selected="true" className="h-[22px] w-[90px] rounded-t-[3px] border border-b-0 border-[#808080] bg-[#f0f0f0]">
        Осциллограф
      </button>
      {tabs.map((t) => (
        <button key={t.label} type="button" role="tab" className={`h-[20px] rounded-t-[3px] border border-b-0 border-[#808080] bg-linear-to-b whitespace-nowrap ${t.style}`}>
          {t.label}
        </button>
      ))}
    </div>
  </header>
);

const StatusBar = () => (
  <footer className="shrink-0">
    <div className="flex h-5 gap-[3px] border-t border-[#808080] pt-[2px] font-[Roboto,sans-serif] text-[11px] leading-[15px]">
      <span className="w-[189px] border border-t-[#a0a0a0] border-r-white border-b-white border-l-[#a0a0a0] pl-[3px]">USB Осциллограф не подключен</span>
      <span className="flex-1 border border-t-[#a0a0a0] border-r-white border-b-white border-l-[#a0a0a0]" />
      <span className="w-[28px] border border-t-[#a0a0a0] border-r-0 border-b-white border-l-[#a0a0a0] pl-[2px]">1.8</span>
    </div>
    <div className="flex h-[7px] overflow-hidden bg-[#060606] pl-[592px]">
      <div className="w-[22px] bg-[#6b6320]" />
      <div className="w-[22px] bg-[#303030]" />
    </div>
  </footer>
);

export default function App() {
  return (
    <div className="flex h-screen flex-col overflow-hidden bg-[#f0f0f0] font-['Liberation_Sans',Arial,sans-serif] text-black">
      <Header />
      <div className="flex min-h-0 flex-1">
        <Toolbar />
        <section className="flex min-w-0 flex-1 flex-col">
          <Chart />
          <NavRow />
        </section>
      </div>
      <Splitter />
      <main className="flex h-[81px] shrink-0 gap-[5px] border-l border-[#909090] pt-[3px] pb-px pl-[282px]">
        <ChannelPanel />
        <FrequencyPanel />
        <SyncPanel />
        <ControlPanel />
        <TimerPanel />
      </main>
      <StatusBar />
    </div>
  );
}
